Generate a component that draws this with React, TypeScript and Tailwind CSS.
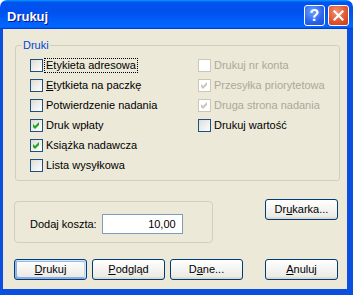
import type { ReactNode } from 'react';

const font = { fontFamily: '"Liberation Sans", Arial, sans-serif' };

interface CheckProps {
  label: ReactNode;
  checked?: boolean;
  disabled?: boolean;
  focused?: boolean;
}

const Check = ({ label, checked = false, disabled = false, focused = false }: CheckProps) => (
  <div className="flex items-center h-[13px]">
    <span
      className={`relative w-[13px] h-[13px] shrink-0 border ${
        disabled ? 'border-[#cac8bb] bg-white' : 'border-[#1c5180] bg-[linear-gradient(135deg,#dcdcd7,#ffffff)]'
      }`}
    >
      {checked && (
        <svg width="11" height="11" viewBox="0 0 11 11" className="absolute inset-0">
          <polygon points="2,4 4,6 8,2 8,5 4,9 2,7" fill={disabled ? '#cac8bb' : '#21a121'} />
        </svg>
      )}
    </span>
    <span
      className={`ml-[1px] px-[1px] leading-[13px] border ${
        focused ? 'border-dotted border-black' : 'border-transparent'
      } ${disabled ? 'text-[#aca899]' : 'text-black'}`}
    >
      {label}
    </span>
  </div>
);

interface BtnProps {
  children: ReactNode;
  def?: boolean;
  className?: string;
}

const Btn = ({ children, def = false, className = '' }: BtnProps) => (
  <button
    className={`w-[73px] h-[21px] flex items-center justify-center rounded-[3px] border border-[#003c74] bg-[linear-gradient(180deg,#ffffff,#ecebe6_86%,#d6d0c5)] text-black text-[11px] ${
      def
        ? 'shadow-[inset_-1px_1px_#cee7ff,inset_1px_2px_#98b8ea,inset_-2px_2px_#bcd4f6,inset_1px_-1px_#89ade4,inset_2px_-2px_#89ade4]'
        : ''
    } ${className}`}
  >
    {children}
  </button>
);

export default function App() {
  return (
    <div className="w-[353px] h-[295px] flex flex-col text-[11px] select-none" style={font}>
      {/* title bar */}
      <div className="h-[29px] shrink-0 flex items-start rounded-t-[7px] bg-[linear-gradient(180deg,#0997ff,#0053ee_8%,#0050ee_40%,#0066ff_88%,#0066ff_93%,#005bff_95%,#003dd7_96%,#003dd7)]">
        <span className="ml-[7px] mt-[9px] text-[13px] leading-[16px] font-bold text-white [text-shadow:1px_1px_#0f1089]">
          Drukuj
        </span>
        <div className="ml-auto mr-[4px] mt-[5px] flex gap-[3px]">
          <div className="w-[21px] h-[21px] rounded-[3px] border border-white bg-[radial-gradient(circle_at_40%_30%,#6fa2ff,#2a63eb_60%,#1c4fd6)] flex items-center justify-center text-white font-bold text-[16px] leading-none">
            ?
          </div>
          <div className="w-[21px] h-[21px] rounded-[3px] border border-white bg-[radial-gradient(circle_at_40%_30%,#f0906e,#e0532f_60%,#c7391a)] flex items-center justify-center">
            <svg width="11" height="11" viewBox="0 0 11 11">
              <path d="M1.5 1.5 L9.5 9.5 M9.5 1.5 L1.5 9.5" stroke="white" strokeWidth="2.2" strokeLinecap="square" />
            </svg>
          </div>
        </div>
      </div>

      {/* client area */}
      <div className="flex-1 flex flex-col bg-[#ece9d8] border-l-[3px] border-r-[6px] border-b-[6px] border-[#0b4fe0]">
        <div className="relative mt-[16px] ml-[12px] w-[325px] h-[136px] border border-[#d0d0bf] rounded-[3px] flex pt-[13px] pl-[14px]">
          <span className="absolute -top-[7px] left-[6px] px-[1px] bg-[#ece9d8] text-[#0046d5] leading-[13px]">
            Druki
          </span>
          <div className="w-[168px] flex flex-col gap-[7px]">
            <Check label="Etykieta adresowa" focused />
            <Check
              label={
                <>
                  <u>E</u>tytkieta na paczkę
                </>
              }
            />
            <Check label="Potwierdzenie nadania" />
            <Check label="Druk wpłaty" checked />
            <Check label="Książka nadawcza" checked />
            <Check label="Lista wysyłkowa" />
          </div>
          <div className="flex flex-col gap-[7px]">
            <Check label="Drukuj nr konta" disabled />
            <Check label="Przesyłka priorytetowa" checked disabled />
            <Check label="Druga strona nadania" checked disabled />
            <Check label="Drukuj wartość" />
          </div>
        </div>

        <div className="mt-[18px] flex items-start">
          <div className="ml-[11px] mt-[2px] w-[199px] h-[42px] border border-[#d0d0bf] rounded-[4px] flex items-start pt-[12px] pl-[15px]">
            <span className="mt-[4px] leading-[13px]">Dodaj koszta:</span>
            <div className="ml-[5px] w-[81px] h-[20px] border border-[#7f9db9] bg-white flex items-center justify-end pr-[6px] leading-[13px]">
              10,00
            </div>
          </div>
          <Btn className="ml-auto mr-[9px]">
            Dr<u>u</u>karka...
          </Btn>
        </div>

        <div className="mt-[16px] flex items-start">
          <div className="ml-[11px] flex gap-[5px]">
            <Btn def>
              <u>D</u>rukuj
            </Btn>
            <Btn>
              <u>P</u>odgląd
            </Btn>
            <Btn>
              D<u>a</u>ne...
            </Btn>
          </div>
          <Btn className="ml-auto mr-[9px]">
            <u>A</u>nuluj
          </Btn>
        </div>
      </div>
    </div>
  );
}
